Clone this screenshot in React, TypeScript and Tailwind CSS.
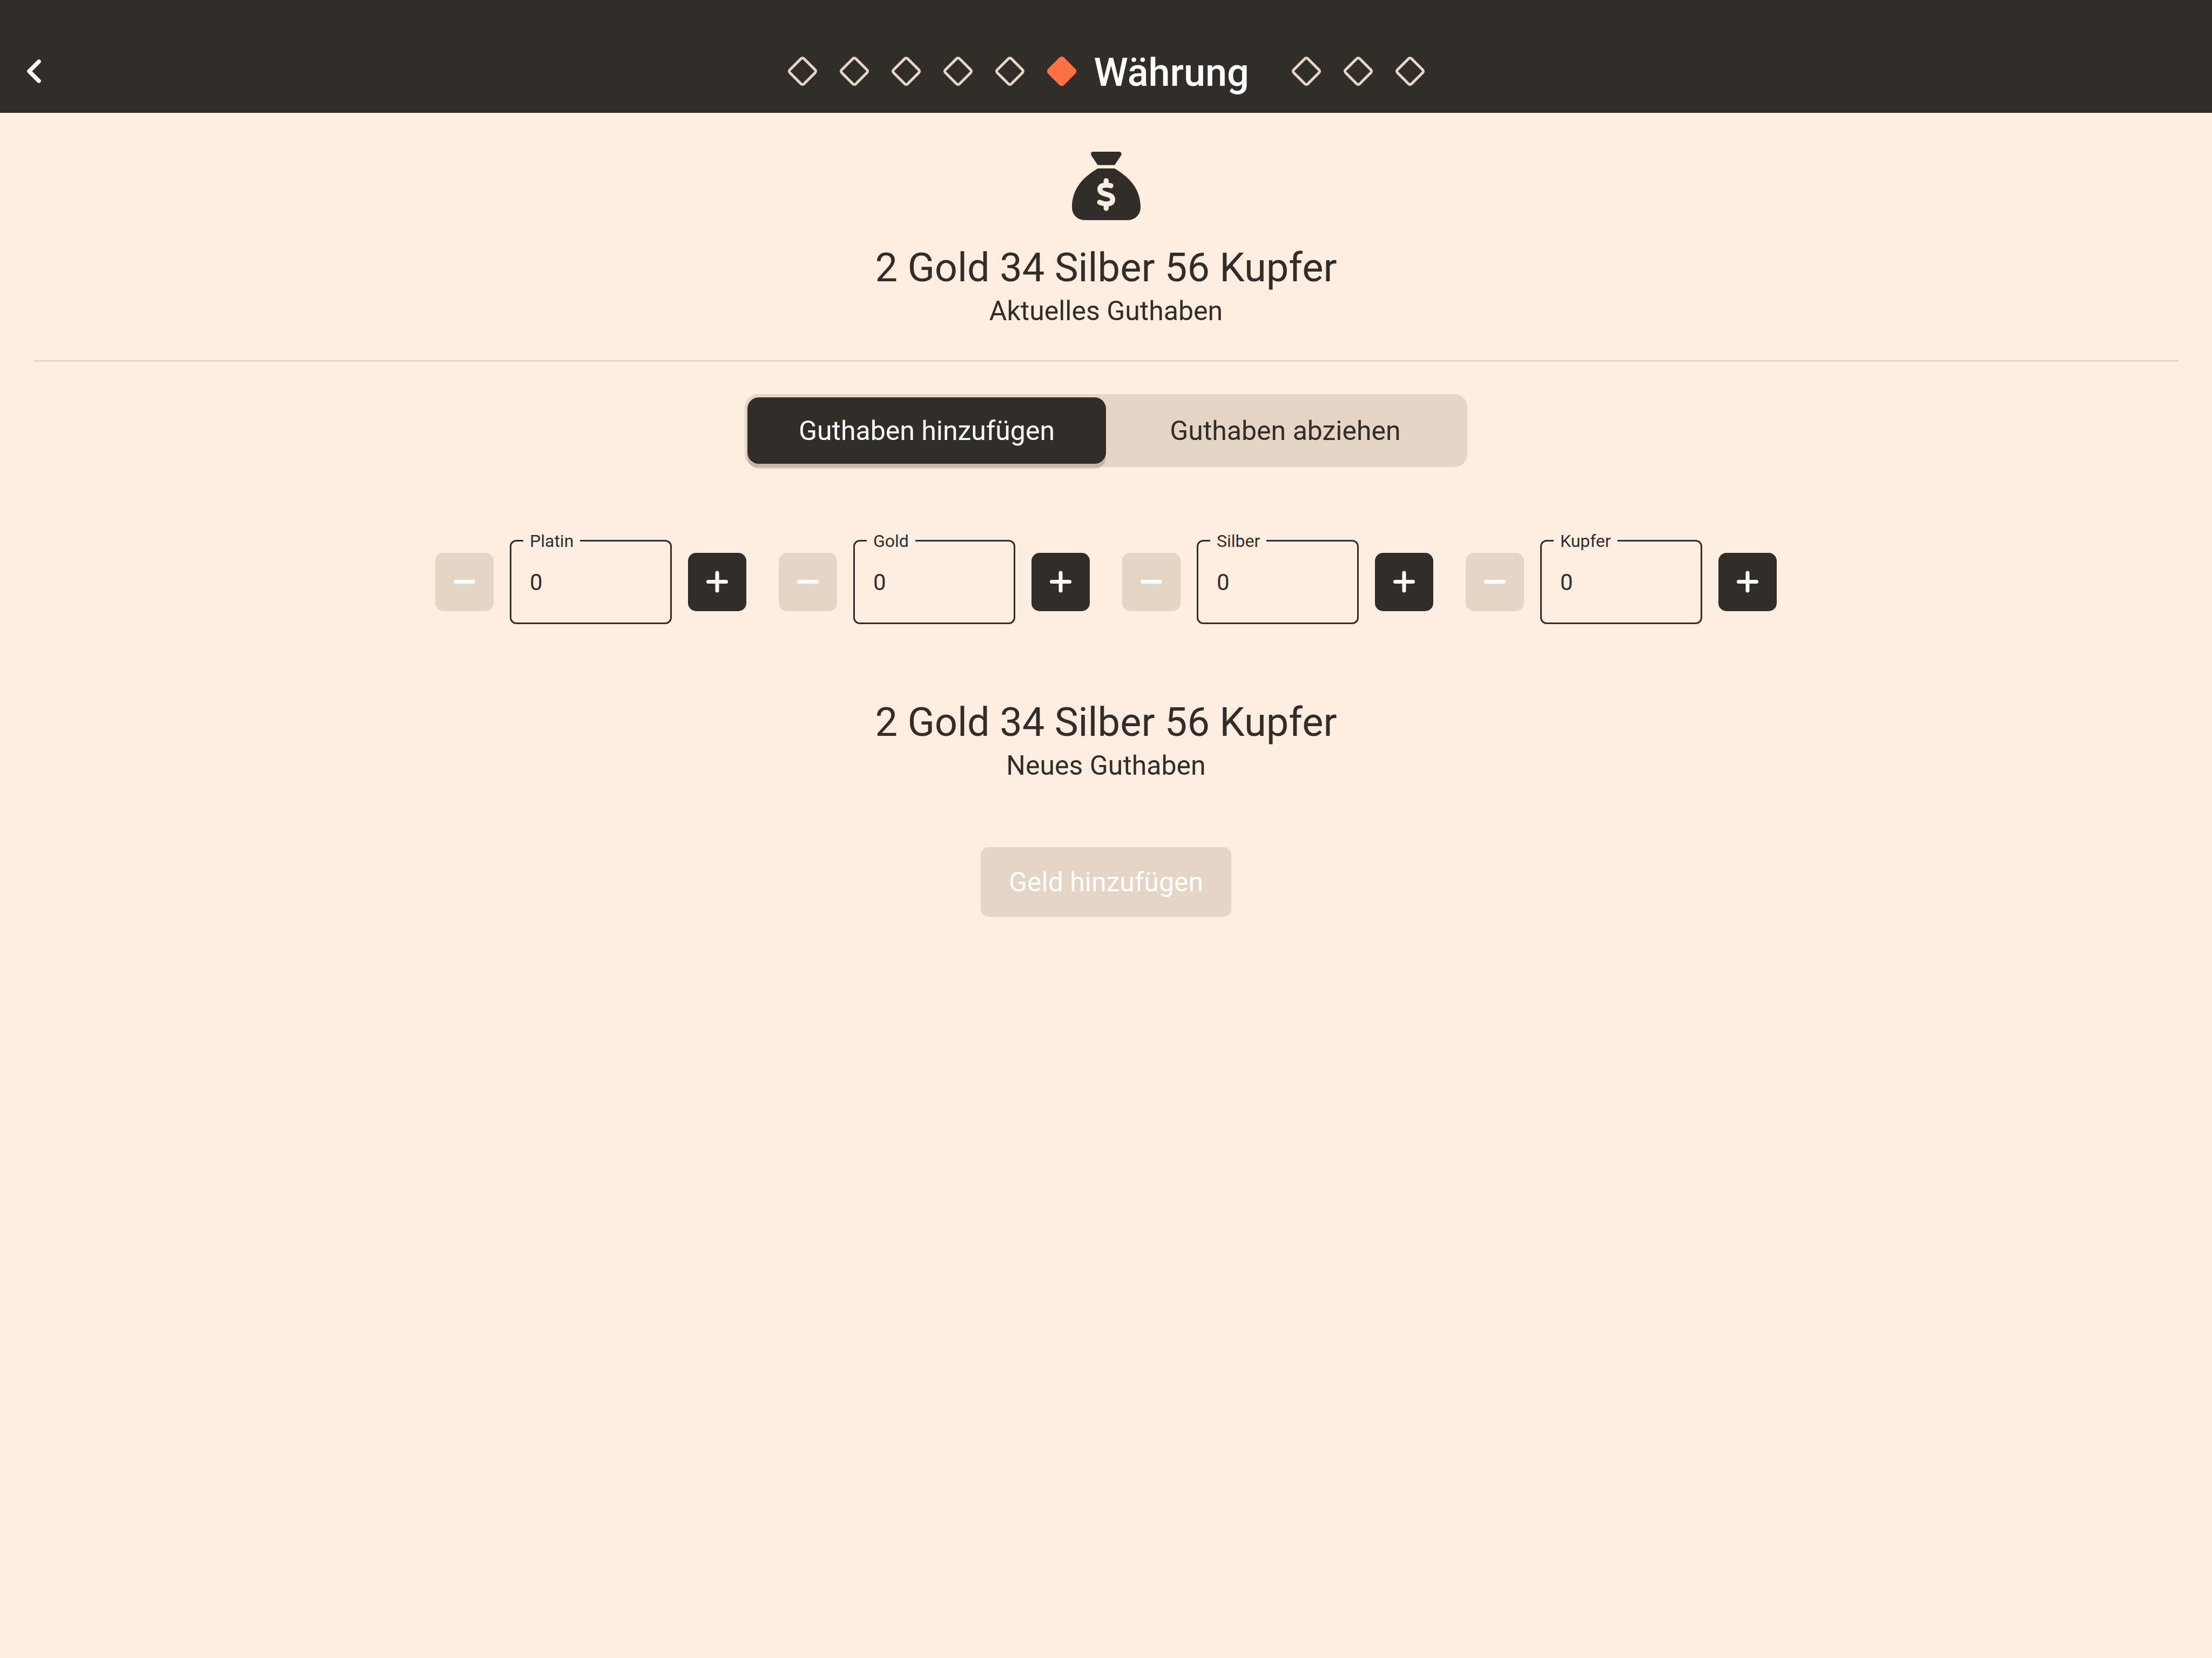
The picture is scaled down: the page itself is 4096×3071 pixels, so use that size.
import { useState } from "react";

const coins = ["Platin", "Gold", "Silber", "Kupfer"];

function Diamond({ active = false }: { active?: boolean }) {
  return (
    <svg viewBox="0 0 72 72" className="size-[72px] shrink-0" aria-hidden="true">
      {active ? (
        <rect x="15" y="15" width="42" height="42" rx="6" transform="rotate(45 36 36)" fill="#ff7142" />
      ) : (
        <rect x="17.5" y="17.5" width="37" height="37" rx="4" transform="rotate(45 36 36)" fill="none" stroke="#e5d5c5" strokeWidth="5" />
      )}
    </svg>
  );
}

function MoneyBag() {
  return (
    <svg viewBox="137 63 381 381" className="size-[127px]" aria-hidden="true">
      <path
        fill="#312e29"
        d="M254 63H400C410 63 415 73 410 83L374 137H280L244 83C239 73 244 63 254 63Z M280 156H374C450 202 518 264 518 372C518 412 488 443 448 443H207C167 443 137 412 137 372C137 264 204 202 280 156Z"
      />
      <g fill="none" stroke="#fdeee1" strokeWidth="28" strokeLinecap="round" strokeLinejoin="round">
        <path d="M353 252C322 245 292 248 292 271C292 308 363 290 363 328C363 357 326 359 291 344" />
        <path d="M327 224V242M327 358V378" />
      </g>
    </svg>
  );
}

function Step({ kind, coin, disabled, onClick }: { kind: "plus" | "minus"; coin: string; disabled?: boolean; onClick: () => void }) {
  return (
    <button
      type="button"
      disabled={disabled}
      onClick={onClick}
      aria-label={kind === "plus" ? `${coin} erhöhen` : `${coin} verringern`}
      className="flex size-[108px] items-center justify-center rounded-[15px] bg-[#312e29] disabled:bg-[#e5d5c5]"
    >
      <svg viewBox="0 0 42 42" className="size-[42px]" fill="none" stroke="white" strokeWidth="7" strokeLinecap="round" aria-hidden="true">
        <path d="M4.5 20.5H37.5" />
        {kind === "plus" && <path d="M21 4V37" />}
      </svg>
    </button>
  );
}

function CoinField({ coin }: { coin: string }) {
  const [amount, setAmount] = useState(0);
  const id = `coin-${coin}`;
  return (
    <div className="flex items-center gap-[30px]">
      <Step kind="minus" coin={coin} disabled={amount === 0} onClick={() => setAmount(amount - 1)} />
      <div className="relative">
        <input
          id={id}
          inputMode="numeric"
          value={amount}
          onChange={(e) => setAmount(Number(e.target.value) || 0)}
          className="block h-[156px] w-[300px] rounded-[12px] border-[3px] border-[#312e29] bg-transparent px-[34px] text-[42px] leading-[48px] outline-none"
        />
        <label htmlFor={id} className="absolute -top-[17px] left-[25px] bg-[#fdeee1] px-3 text-[32px] leading-[38px]">
          {coin}
        </label>
      </div>
      <Step kind="plus" coin={coin} onClick={() => setAmount(amount + 1)} />
    </div>
  );
}

function Balance({ label }: { label: string }) {
  return (
    <div className="flex flex-col items-center gap-2 text-center">
      <p className="text-[74px] leading-[84px]">2 Gold 34 Silber 56 Kupfer</p>
      <p className="text-[50px] leading-[60px]">{label}</p>
    </div>
  );
}

export default function App() {
  const [mode, setMode] = useState(0);
  return (
    <div className="min-h-screen bg-[#fdeee1] font-['Roboto',sans-serif] text-[#312e29]">
      <header className="grid grid-cols-[1fr_auto_1fr] items-center bg-[#312e29] pt-[96px] pb-[41px] text-white">
        <button type="button" aria-label="Zurück" className="ml-[27px] size-[72px]">
          <svg viewBox="0 0 72 72" className="size-[72px]" fill="none" stroke="white" strokeWidth="7.5" strokeLinecap="round" strokeLinejoin="round" aria-hidden="true">
            <path d="M45 18L27 36L45 54" />
          </svg>
        </button>
        <div className="flex items-center gap-6">
          {[0, 1, 2, 3, 4].map((i) => (
            <Diamond key={i} />
          ))}
          <Diamond active />
          <h1 className="w-[333px] pt-[6px] text-[72px] leading-[66px] font-medium">Währung</h1>
          {[6, 7, 8].map((i) => (
            <Diamond key={i} />
          ))}
        </div>
      </header>

      <main className="flex flex-col items-center px-[62px] pt-[72px]">
        <MoneyBag />
        <div className="mt-[46px]">
          <Balance label="Aktuelles Guthaben" />
        </div>
        <hr className="mt-[61px] w-full border-t-[3px] border-[#e5d5c5]" />

        <div className="mt-[60px] grid w-[1338px] grid-cols-2 rounded-[24px] bg-[#e5d5c5] px-[5px] py-[6px]">
          {["Guthaben hinzufügen", "Guthaben abziehen"].map((text, i) => (
            <button
              key={text}
              type="button"
              aria-pressed={mode === i}
              onClick={() => setMode(i)}
              className="h-[123px] rounded-[21px] text-[50px] leading-[60px] aria-pressed:bg-[#312e29] aria-pressed:text-white aria-pressed:shadow-[0_9px_0_rgba(0,0,0,0.15)]"
            >
              {text}
            </button>
          ))}
        </div>

        <div className="mt-[135px] flex flex-wrap justify-center gap-[60px]">
          {coins.map((coin) => (
            <CoinField key={coin} coin={coin} />
          ))}
        </div>

        <div className="mt-[140px]">
          <Balance label="Neues Guthaben" />
        </div>
        <button
          type="button"
          disabled
          className="mt-[121px] h-[129px] w-[464px] rounded-[15px] bg-[#e5d5c5] text-[50px] leading-[60px] text-white"
        >
          Geld hinzufügen
        </button>
      </main>
    </div>
  );
}
